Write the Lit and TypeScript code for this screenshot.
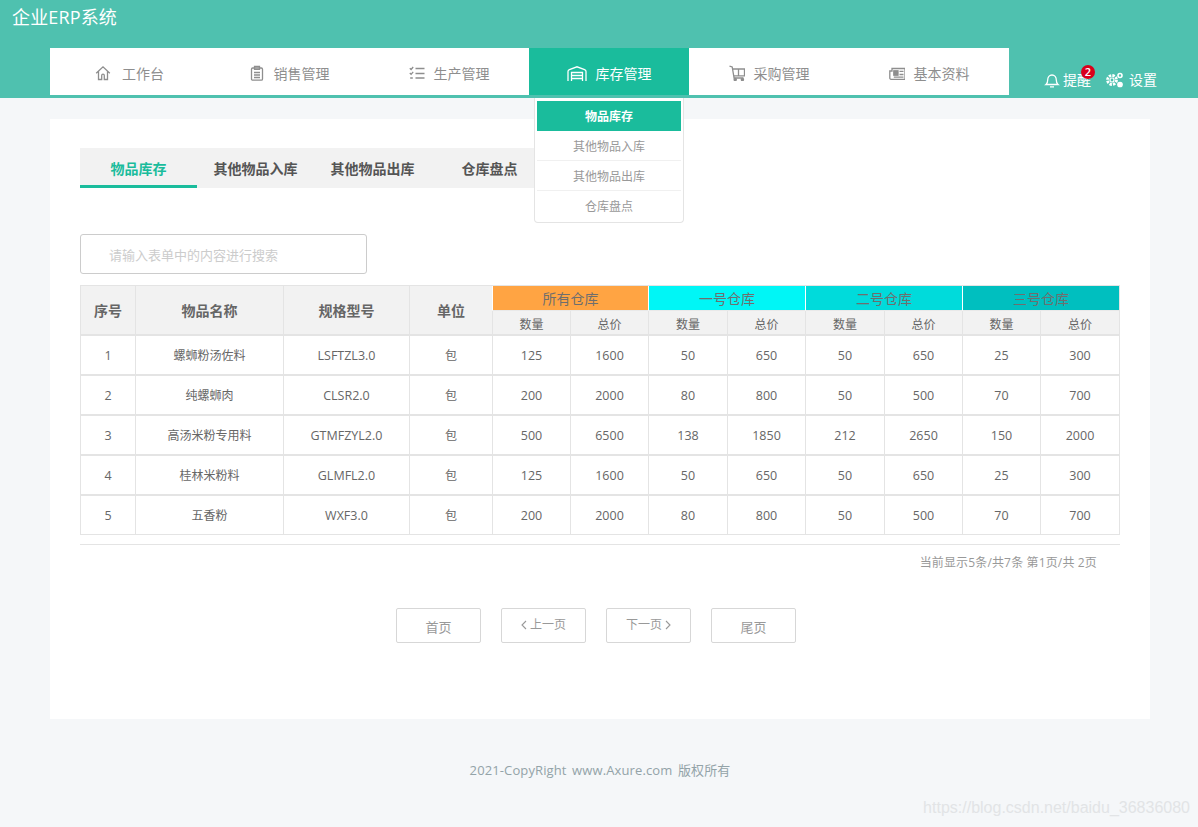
import { LitElement, html, css, svg } from "lit";
import { customElement } from "lit/decorators.js";

const ICONS: Record<string, unknown> = {
  home: svg`<path d="M1.200 8.200 8 1.800l6.800 6.400M3.500 6.500V14.500h3.200V10.500a1.300 1.300 0 0 1 2.600 0V14.500h3.200V6.500" />`,
  clip: svg`<rect x="2.500" y="3" width="11" height="12.200" rx="1.200"/><path d="M5.500 1.500h5v2.800h-5zM5 7.500h6M5 10h6M5 12.500h6"/>`,
  list: svg`<path d="M.8 3.200l1.300 1.300L4.200 2M.8 8l1.300 1.300L4.200 6.800M1.200 13h2.600M6.500 3.500h9M6.500 8.500h9M6.500 13h9"/>`,
  store: svg`<path d="M1 16V6.500Q1 5.200 2.400 4.600L10 1.800l7.600 2.800Q19 5.200 19 6.500V16M4.500 16V7.500h11V16M4.500 10.500h11M4.500 13.500h11"/>`,
  cart: svg`<path d="M.5 1.200 3.200 2l1.900 11h9.400M3.800 4h11.700v6.800H4.800M9.500 4v6.800"/><circle cx="6.200" cy="14.600" r="1.100" fill="currentColor"/><circle cx="13.400" cy="14.600" r="1.100" fill="currentColor"/>`,
  news: svg`<path d="M3 3.500h13v10.800H2A1.200 1.200 0 0 1 .8 13V6H3z"/><rect x="4.800" y="5.800" width="4.200" height="4.400" fill="currentColor"/><path d="M10.500 6.300h4M10.500 9.500h4M4.800 12.200h9.700"/>`,
  bell: svg`<path d="M2 12.500c1.300-1 1.700-2 1.700-4.500 0-2.800 1.800-5 4.300-5s4.300 2.200 4.300 5c0 2.500.4 3.500 1.700 4.500zM6 14.800h4"/>`,
  gear: svg`<circle cx="7" cy="9" r="4.500" stroke-width="2.800" stroke-dasharray="2.400 1.100"/><circle cx="7" cy="9" r="2" stroke-width="1.200"/><circle cx="15" cy="4.500" r="2" stroke-width="1.600"/><circle cx="15" cy="13.500" r="2.200" fill="currentColor"/>`,
};

const NAV = [
  ["home", "工作台"],
  ["clip", "销售管理"],
  ["list", "生产管理"],
  ["store", "库存管理"],
  ["cart", "采购管理"],
  ["news", "基本资料"],
];
const MENU = ["物品库存", "其他物品入库", "其他物品出库", "仓库盘点"];
const ROWS = [
  ["1", "螺蛳粉汤佐料", "LSFTZL3.0", "包", "125", "1600", "50", "650", "50", "650", "25", "300"],
  ["2", "纯螺蛳肉", "CLSR2.0", "包", "200", "2000", "80", "800", "50", "500", "70", "700"],
  ["3", "高汤米粉专用料", "GTMFZYL2.0", "包", "500", "6500", "138", "1850", "212", "2650", "150", "2000"],
  ["4", "桂林米粉料", "GLMFL2.0", "包", "125", "1600", "50", "650", "50", "650", "25", "300"],
  ["5", "五香粉", "WXF3.0", "包", "200", "2000", "80", "800", "50", "500", "70", "700"],
];
const COLS = [55, 148, 126, 83, 78, 78, 79, 78, 79, 78, 78, 79];
const WH = [["所有仓库", "c0"], ["一号仓库", "c1"], ["二号仓库", "c2"], ["三号仓库", "c3"]];

function icon(name: string, w: number, h: number) {
  return html`<svg class="ico" width=${w} height=${h} viewBox="0 0 ${w} ${h}" fill="none" stroke="currentColor" stroke-width="1.300">${ICONS[name]}</svg>`;
}
const left = html`<svg class="chev" width="6" height="10" viewBox="0 0 6 10" fill="none" stroke="currentColor" stroke-width="1.100"><path d="M5 1 1 5l4 4"/></svg>`;
const right = html`<svg class="chev" width="6" height="10" viewBox="0 0 6 10" fill="none" stroke="currentColor" stroke-width="1.100"><path d="M1 1l4 4-4 4"/></svg>`;

@customElement("app-root")
export class AppRoot extends LitElement {
  static styles = css`
    :host {
      display: block;
      height: 827px;
      overflow: hidden;
      position: relative;
      background: #f5f7f9;
      font-family: "Open Sans", "Noto Sans CJK SC", sans-serif;
      color: #666;
    }
    .head {
      height: 98px;
      background: #4fc1af;
      box-sizing: border-box;
    }
    .title {
      height: 48px;
      padding: 4px 0 0 12px;
      box-sizing: border-box;
      font-size: 18px;
      line-height: 26px;
      letter-spacing: 0.15px;
      color: #fff;
    }
    .bar {
      display: flex;
      padding-left: 50px;
    }
    .nav {
      display: flex;
      width: 959px;
      height: 47px;
      background: #fff;
    }
    .item {
      position: relative;
      flex: 0 0 160px;
      box-sizing: border-box;
      padding-top: 2px;
      display: flex;
      align-items: center;
      justify-content: center;
      gap: 9px;
      font-size: 14px;
      color: #8e8e8e;
    }
    .item:nth-child(1) {
      flex-basis: 159px;
      gap: 11px;
    }
    .item.on {
      background: #1abc9c;
      color: #fff;
    }
    .tools {
      display: flex;
      align-items: center;
      gap: 15px;
      padding: 18px 0 0 35px;
      color: #fff;
      font-size: 14px;
      line-height: 28px;
      height: 28px;
    }
    .tool {
      position: relative;
      display: flex;
      align-items: center;
      gap: 3px;
    }
    .tool + .tool { gap: 6px; margin-left: -1px; }
    .badge {
      position: absolute;
      left: 37px;
      top: -1px;
      width: 14px;
      height: 14px;
      border-radius: 50%;
      background: #d9001b;
      color: #fff;
      font-size: 11px;
      font-weight: 600;
      line-height: 14px;
      text-align: center;
    }
    .drop {
      position: absolute;
      left: 5px;
      top: 50px;
      width: 150px;
      box-sizing: border-box;
      padding: 3px 2px 1px;
      background: #fff;
      border: 1px solid #e4e4e4;
      border-top: 0;
      border-radius: 0 0 4px 4px;
      z-index: 2;
    }
    .drop div {
      height: 30px;
      padding-top: 1px;
      line-height: 30px;
      text-align: center;
      font-size: 12px;
      color: #999;
      border-bottom: 1px solid #f0f0f0;
      box-sizing: border-box;
    }
    .drop div:last-child { border-bottom: 0; }
    .drop .sel {
      background: #1abc9c;
      color: #fff;
      font-weight: 700;
      border-bottom: 0;
    }
    .card {
      width: 1100px;
      height: 600px;
      margin: 21px 0 0 50px;
      padding: 29px 30px 0;
      box-sizing: border-box;
      background: #fff;
    }
    .tabs {
      display: flex;
      height: 40px;
      width: 468px;
      background: #f2f2f2;
    }
    .tab {
      flex: 0 0 117px;
      box-sizing: border-box;
      height: 40px;
      line-height: 42px;
      text-align: center;
      font-size: 14px;
      font-weight: 700;
      color: #555;
    }
    .tab.on {
      color: #1abc9c;
      border-bottom: 3px solid #1abc9c;
    }
    .search {
      width: 287px;
      height: 40px;
      margin-top: 46px;
      box-sizing: border-box;
      border: 1px solid #ccc;
      border-radius: 3px;
      padding-left: 28px;
      line-height: 40px;
      font-size: 13px;
      color: #ccc;
    }
    table {
      margin-top: 11px;
      width: 1040px;
      table-layout: fixed;
      border-collapse: separate;
      border-spacing: 0;
      border-top: 1px solid #e4e4e4;
      border-right: 1px solid #e4e4e4;
    }
    th, td {
      padding: 0;
      text-align: center;
      border-left: 1px solid #e4e4e4;
      border-bottom: 1px solid #e4e4e4;
      box-sizing: border-box;
    }
    thead th {
      background: #f2f2f2;
      color: #666;
      font-size: 14px;
      font-weight: 700;
    }
    thead th.main { border-bottom-width: 2px; }
    thead .r1 { height: 25px; }
    thead .r2 { height: 25px; }
    thead th.wh {
      font-weight: 400;
      color: #6e6e6e;
      border-left-color: #fff;
      border-bottom-color: #e9e9e9;
    }
    thead th.sub {
      padding-top: 3px;
      font-size: 12px;
      font-weight: 400;
      border-bottom-width: 2px;
    }
    th.c0 { background: #ffa443; }
    th.c1 { background: #00f6f6; }
    th.c2 { background: #00dbdb; }
    th.c3 { background: #00bfbf; }
    tbody tr { height: 40px; }
    tbody tr:last-child { height: 39px; }
    tbody td {
      font-size: 12px;
      color: #666;
      border-bottom-width: 2px;
    }
    tbody tr:last-child td { border-bottom-width: 1px; }
    .num { font-size: 12.500px; }
    .rule {
      height: 1px;
      margin-top: 9px;
      background: #e4e4e4;
    }
    .info {
      margin-top: 9px;
      padding-right: 23px;
      text-align: right;
      font-size: 12px;
      letter-spacing: 0.15px;
      line-height: 18px;
      color: #999;
    }
    .pager {
      display: flex;
      gap: 20px;
      margin: 36px 0 0 316px;
    }
    .btn {
      display: flex;
      align-items: center;
      justify-content: center;
      gap: 3px;
      width: 85px;
      height: 35px;
      box-sizing: border-box;
      border: 1px solid #d7d7d7;
      border-radius: 2px;
      padding-top: 2px;
      line-height: 20px;
      font-size: 13px;
      color: #999;
    }
    .btn.small {
      padding-top: 0;
      padding-bottom: 1px;
      font-size: 12px;
    }
    .foot {
      margin-top: 41px;
      padding-left: 2px;
      text-align: center;
      font-size: 13px;
      letter-spacing: 0.12px;
      word-spacing: 2px;
      line-height: 20px;
      color: #93a3a8;
    }
    .mark {
      position: absolute;
      right: 8px;
      bottom: 9px;
      font-family: "Liberation Sans", sans-serif;
      font-size: 16px;
      line-height: 20px;
      color: #e2e4e6;
    }
    .ico, .chev { display: block; flex: none; }
  `;

  render() {
    return html`
      <div class="head">
        <div class="title">企业ERP系统</div>
        <div class="bar">
          <div class="nav">
            ${NAV.map(([ic, label], i) => html`
              <div class="item ${i === 3 ? "on" : ""}">
                ${ic === "store" ? icon(ic, 20, 16) : icon(ic, 16, 16)}<span>${label}</span>
                ${i === 3 ? html`<div class="drop">
                  ${MENU.map((m, k) => html`<div class=${k === 0 ? "sel" : ""}>${m}</div>`)}
                </div>` : ""}
              </div>`)}
          </div>
          <div class="tools">
            <div class="tool">${icon("bell", 16, 16)}<span>提醒</span><span class="badge">2</span></div>
            <div class="tool">${icon("gear", 18, 18)}<span>设置</span></div>
          </div>
        </div>
      </div>
      <div class="card">
        <div class="tabs">
          ${MENU.map((m, i) => html`<div class="tab ${i === 0 ? "on" : ""}">${m}</div>`)}
        </div>
        <div class="search">请输入表单中的内容进行搜索</div>
        <table>
          <colgroup>${COLS.map((w) => html`<col style="width:${w}px" />`)}</colgroup>
          <thead>
            <tr class="r1">
              ${["序号", "物品名称", "规格型号", "单位"].map((t) => html`<th class="main" rowspan="2">${t}</th>`)}
              ${WH.map(([t, c]) => html`<th class="wh ${c}" colspan="2">${t}</th>`)}
            </tr>
            <tr class="r2">
              ${WH.map(() => html`<th class="sub">数量</th><th class="sub">总价</th>`)}
            </tr>
          </thead>
          <tbody>
            ${ROWS.map((r) => html`<tr>${r.map((c) => html`<td class=${/^[\x00-\x7f]+$/.test(c) ? "num" : ""}>${c}</td>`)}</tr>`)}
          </tbody>
        </table>
        <div class="rule"></div>
        <div class="info">当前显示5条/共7条 第1页/共 2页</div>
        <div class="pager">
          <div class="btn">首页</div>
          <div class="btn small">${left}<span>上一页</span></div>
          <div class="btn small"><span>下一页</span>${right}</div>
          <div class="btn">尾页</div>
        </div>
      </div>
      <div class="foot">2021-CopyRight www.Axure.com 版权所有</div>
      <div class="mark">https://blog.csdn.net/baidu_36836080</div>
    `;
  }
}
